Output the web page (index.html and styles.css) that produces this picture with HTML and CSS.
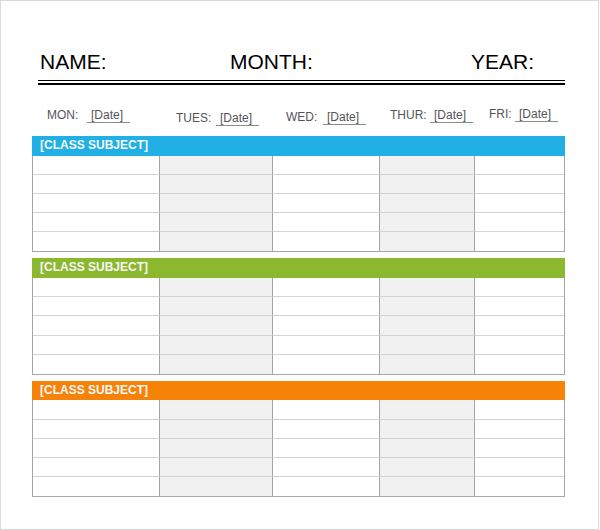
FILE: index.html
```html
<!DOCTYPE html>
<html>
<head>
<meta charset="utf-8">
<link rel="stylesheet" href="styles.css">
</head>
<body>
<div class="page">
  <div class="title-row">
    <span class="title title-name">NAME:</span>
    <span class="title title-month">MONTH:</span>
    <span class="title">YEAR:</span>
  </div>
  <div class="rule"></div>
  <div class="days">
    <div class="day day-mon"><span class="label">MON:</span><span class="date">[Date]</span></div>
    <div class="day day-tue"><span class="label">TUES:</span><span class="date">[Date]</span></div>
    <div class="day day-wed"><span class="label">WED:</span><span class="date">[Date]</span></div>
    <div class="day day-thu"><span class="label">THUR:</span><span class="date">[Date]</span></div>
    <div class="day day-fri"><span class="label">FRI:</span><span class="date">[Date]</span></div>
  </div>

  <div class="section">
    <div class="subject subject-blue">[CLASS SUBJECT]</div>
    <div class="grid">
      <div class="cell"></div><div class="cell shade"></div><div class="cell"></div><div class="cell shade"></div><div class="cell"></div>
      <div class="cell"></div><div class="cell shade"></div><div class="cell"></div><div class="cell shade"></div><div class="cell"></div>
      <div class="cell"></div><div class="cell shade"></div><div class="cell"></div><div class="cell shade"></div><div class="cell"></div>
      <div class="cell"></div><div class="cell shade"></div><div class="cell"></div><div class="cell shade"></div><div class="cell"></div>
      <div class="cell last"></div><div class="cell shade last"></div><div class="cell last"></div><div class="cell shade last"></div><div class="cell last"></div>
    </div>
  </div>

  <div class="section">
    <div class="subject subject-green">[CLASS SUBJECT]</div>
    <div class="grid">
      <div class="cell"></div><div class="cell shade"></div><div class="cell"></div><div class="cell shade"></div><div class="cell"></div>
      <div class="cell"></div><div class="cell shade"></div><div class="cell"></div><div class="cell shade"></div><div class="cell"></div>
      <div class="cell"></div><div class="cell shade"></div><div class="cell"></div><div class="cell shade"></div><div class="cell"></div>
      <div class="cell"></div><div class="cell shade"></div><div class="cell"></div><div class="cell shade"></div><div class="cell"></div>
      <div class="cell last"></div><div class="cell shade last"></div><div class="cell last"></div><div class="cell shade last"></div><div class="cell last"></div>
    </div>
  </div>

  <div class="section">
    <div class="subject subject-orange">[CLASS SUBJECT]</div>
    <div class="grid">
      <div class="cell"></div><div class="cell shade"></div><div class="cell"></div><div class="cell shade"></div><div class="cell"></div>
      <div class="cell"></div><div class="cell shade"></div><div class="cell"></div><div class="cell shade"></div><div class="cell"></div>
      <div class="cell"></div><div class="cell shade"></div><div class="cell"></div><div class="cell shade"></div><div class="cell"></div>
      <div class="cell"></div><div class="cell shade"></div><div class="cell"></div><div class="cell shade"></div><div class="cell"></div>
      <div class="cell last"></div><div class="cell shade last"></div><div class="cell last"></div><div class="cell shade last"></div><div class="cell last"></div>
    </div>
  </div>
</div>
</body>
</html>
```

FILE: styles.css
```css
* { box-sizing: border-box; }

html, body {
  margin: 0;
  padding: 0;
  background: #ffffff;
}

body {
  font-family: "Liberation Sans", Arial, sans-serif;
}

.page {
  width: 599px;
  height: 530px;
  border: 1px solid #d9d9d9;
  padding-top: 49px;
  overflow: hidden;
}

.title-row {
  display: flex;
  padding-left: 39px;
  height: 24px;
}

.title {
  font-size: 21px;
  line-height: 24px;
  color: #000;
}

.title-name { width: 190px; }
.title-month { width: 241px; }

.rule {
  margin: 6px 0 0 37px;
  width: 527px;
  height: 5px;
  border-top: 1px solid #000;
  border-bottom: 2px solid #000;
}

.days {
  display: flex;
  align-items: flex-start;
  height: 51px;
  padding: 23px 0 0 46px;
  font-size: 12px;
  line-height: 13px;
  color: #555558;
}

.day { display: flex; align-items: flex-start; }

.label { width: 40px; }

.date {
  padding: 0 7px 0 4px;
  border-bottom: 1px solid #8c8c8c;
}

.day-mon { width: 129px; margin-top: 1px; }
.day-tue { width: 110px; margin-top: 4px; }
.day-wed { width: 104px; margin-top: 3px; }
.day-wed .label { width: 37px; }
.day-thu { width: 99px; margin-top: 1px; }
.day-fri .label { width: 26px; }

.section {
  margin-left: 31px;
  width: 533px;
  margin-bottom: 6px;
}

.subject {
  height: 19.5px;
  line-height: 19.5px;
  padding-left: 8px;
  font-size: 12px;
  font-weight: bold;
  color: #f6f6f6;
}

.subject-blue { background: #20b0e5; }
.subject-green { background: #8cb82f; }
.subject-orange { background: #f78208; }

.grid {
  display: grid;
  grid-template-columns: 126px 113px 107px 95px 90px;
  grid-auto-rows: 19.2px;
  border: 1px solid #a6a6a6;
  border-top: none;
}

.cell {
  border-bottom: 1px solid #d4d4d4;
  border-left: 1px solid #a6a6a6;
}

.cell:nth-child(5n+1) { border-left: none; }

.cell.last { border-bottom: none; }

.shade { background: #f1f1f1; }
```
